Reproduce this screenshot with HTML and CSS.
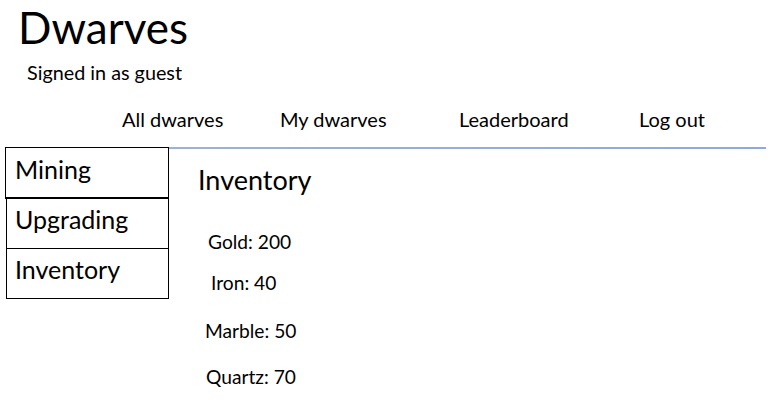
FILE: index.html
```html
<!DOCTYPE html>
<html>
<head>
<meta charset="utf-8">
<link rel="stylesheet" href="styles.css">
</head>
<body>
<header class="header">
  <h1 class="title">Dwarves</h1>
  <div class="signed">Signed in as guest</div>
</header>
<nav class="nav">
  <a class="nav-link">All dwarves</a>
  <a class="nav-link">My dwarves</a>
  <a class="nav-link">Leaderboard</a>
  <a class="nav-link">Log out</a>
</nav>
<main class="main">
  <aside class="sidebar">
    <div class="side-item first">Mining</div>
    <div class="side-item">Upgrading</div>
    <div class="side-item">Inventory</div>
  </aside>
  <section class="content">
    <h2 class="content-title">Inventory</h2>
    <ul class="inv">
      <li class="inv-item gold">Gold: 200</li>
      <li class="inv-item iron">Iron: 40</li>
      <li class="inv-item marble">Marble: 50</li>
      <li class="inv-item quartz">Quartz: 70</li>
    </ul>
  </section>
</main>
</body>
</html>
```

FILE: styles.css
```css
html, body {
  margin: 0;
  padding: 0;
  background: #ffffff;
  color: #000000;
  font-family: Lato, "Open Sans", sans-serif;
}
.header {
  padding-left: 20px;
}
.title {
  margin: 0 0 0 -2px;
  padding-top: 2px;
  font-size: 44px;
  font-weight: 400;
  line-height: 50px;
}
.signed {
  margin-top: 8px;
  padding-left: 7px;
  font-size: 19.8px;
  line-height: 24px;
}
.nav {
  display: grid;
  grid-template-columns: 158px 179px 180px auto;
  padding-left: 122px;
  margin-top: 23px;
  font-size: 20px;
  line-height: 24px;
}
.nav-link {
  color: #000;
  text-decoration: none;
}
.main {
  display: flex;
  margin-top: 16px;
  padding-left: 5px;
}
.sidebar {
  width: 164px;
  flex: none;
}
.side-item {
  box-sizing: border-box;
  height: 50px;
  border: 1.5px solid #000;
  border-top: none;
  margin-left: 1px;
  padding-left: 8px;
  padding-top: 5px;
  font-size: 25px;
  line-height: 30px;
}
.side-item.first {
  height: 52px;
  margin-left: 0;
  border-top: 1.5px solid #000;
  border-bottom-width: 2px;
  padding-left: 9px;
  padding-top: 6px;
}
.content {
  box-sizing: border-box;
  width: 597px;
  flex: none;
  border-top: 2px solid #8eaadc;
  border-image: linear-gradient(90deg, #9db1d4, #8eaadc) 1;
  padding-left: 29px;
}
.content-title {
  margin: 15px 0 0;
  font-size: 27px;
  font-weight: 400;
  line-height: 32px;
}
.inv {
  list-style: none;
  margin: 0;
  padding: 0;
  font-size: 19.2px;
  line-height: 24px;
}
.gold { margin-top: 34px; padding-left: 10px; }
.iron { margin-top: 17px; padding-left: 13px; }
.marble { margin-top: 24px; padding-left: 7px; }
.quartz { margin-top: 22px; padding-left: 8px; }
```
